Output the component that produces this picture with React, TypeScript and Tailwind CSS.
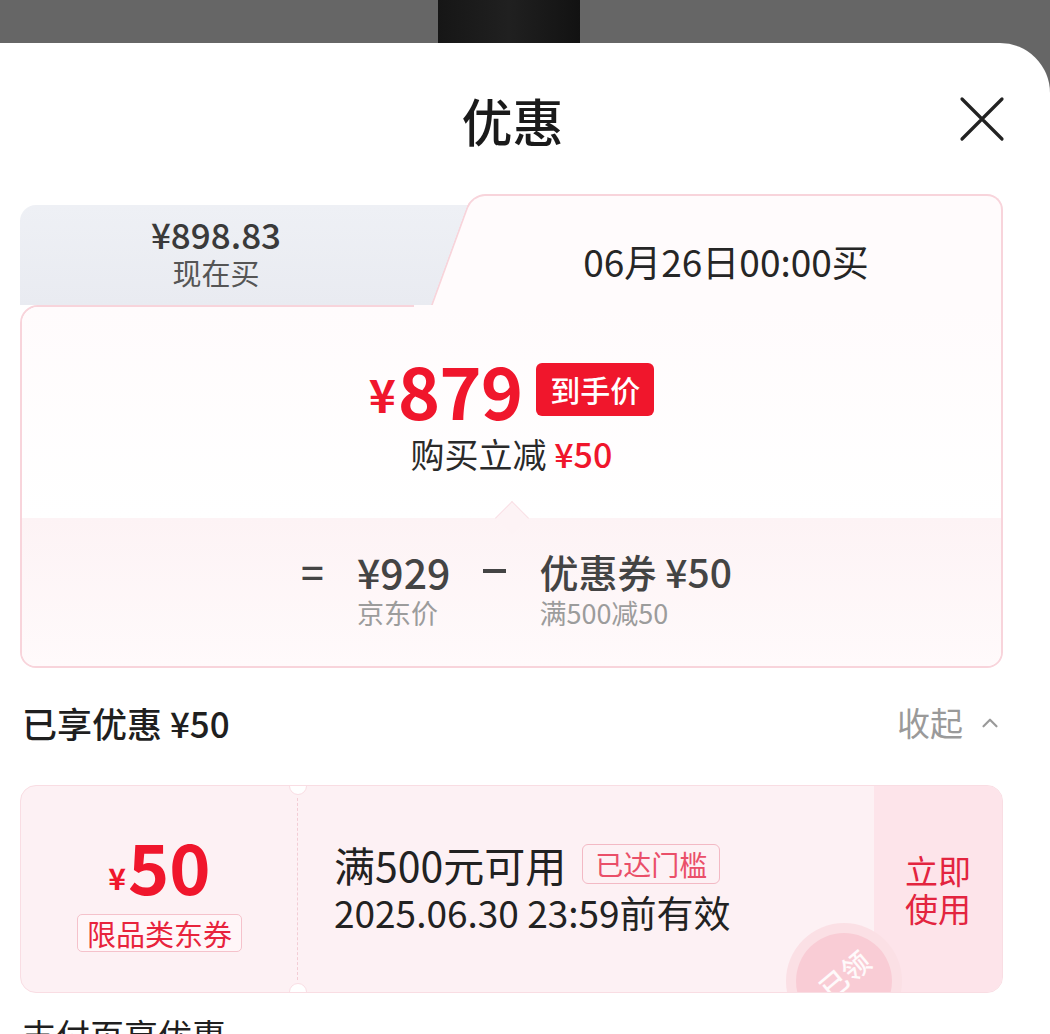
import { ChevronUp } from "lucide-react";

const FONT = { fontFamily: '"Noto Sans CJK SC", "Noto Sans", sans-serif' };

function CloseIcon() {
  return (
    <svg width="46" height="46" viewBox="0 0 46 46" fill="none">
      <path d="M3 3 L43 43 M43 3 L3 43" stroke="#222" strokeWidth="3.2" strokeLinecap="round" />
    </svg>
  );
}

function PriceCard() {
  return (
    <div className="w-[983px]">
      {/* Tabs */}
      <div className="flex h-[111px]">
        <div className="w-[460px] h-[100px] self-end shrink-0 rounded-tl-[16px] bg-gradient-to-b from-[#eef0f5] to-[#e9ebf1] flex">
          <div className="w-[392px] flex flex-col items-center justify-center pb-[6px]">
            <div className="text-[35px] leading-[38px] font-medium text-[#3a3a3a]">¥898.83</div>
            <div className="mt-[2px] text-[29px] leading-[34px] text-[#555]">现在买</div>
          </div>
        </div>
        <div className="relative -ml-[49px] flex-1 h-full">
          {/* slanted edge of the active tab */}
          <div className="absolute left-[20px] top-0 h-[111px] w-[60px] -skew-x-[20deg] rounded-tl-[14px] border-l-2 border-t-2 border-[#f8d4db] bg-[#fffbfc]" />
          <div className="relative ml-[60px] h-[111px] rounded-tr-[16px] border-t-2 border-r-2 border-[#f8d4db] bg-[#fffbfc] flex items-center justify-center pt-[22px] pr-[40px]">
            <span className="text-[37px] text-[#262626]">06月26日00:00买</span>
          </div>
        </div>
      </div>

      {/* Body */}
      <div className="relative rounded-tl-[18px] rounded-b-[16px] border-2 border-[#f8d4db]">
        <div className="absolute -top-[2px] left-[392px] right-0 h-[2px] bg-[#fffbfc]" />
        <div className="h-[211px] rounded-tl-[16px] bg-gradient-to-b from-[#fffbfc] to-white flex flex-col items-center pt-[46px]">
          <div className="flex items-center h-[72px]">
            <span className="text-[46px] font-bold text-[#f0162c] mt-[8px] mr-[2px]">¥</span>
            <span className="text-[72px] leading-[72px] font-bold text-[#f0162c] tracking-[-1px]">879</span>
            <span className="ml-[14px] h-[53px] px-[14px] rounded-[6px] bg-[#f0162c] text-white text-[30px] font-medium flex items-center">
              到手价
            </span>
          </div>
          <div className="mt-[8px] text-[34px] leading-[42px] text-[#2a2a2a]">
            购买立减 <span className="text-[#f0162c] font-medium">¥50</span>
          </div>
        </div>
        <div className="relative h-[148px] rounded-b-[14px] bg-gradient-to-b from-[#fdf3f5] to-[#fffafb] flex justify-center items-start pt-[30px] gap-[33px] pl-[10px]">
          <div className="absolute -top-[12px] left-[478px] w-[24px] h-[24px] rotate-45 bg-[#fdf3f5] border-l border-t border-[#f9e0e5]" />
          <span className="text-[40px] leading-[46px] font-medium text-[#444]">=</span>
          <div className="flex flex-col">
            <span className="text-[41px] leading-[46px] font-medium text-[#444]">¥929</span>
            <span className="mt-[4px] text-[27px] leading-[30px] text-[#9c9c9c]">京东价</span>
          </div>
          <div className="h-[46px] flex items-center">
            <div className="w-[23px] h-[4px] bg-[#444]" />
          </div>
          <div className="flex flex-col">
            <span className="text-[39px] leading-[46px] font-medium text-[#444]">优惠券 ¥50</span>
            <span className="mt-[4px] text-[27px] leading-[30px] text-[#9c9c9c]">满500减50</span>
          </div>
        </div>
      </div>
    </div>
  );
}

function Coupon() {
  return (
    <div className="relative w-[983px] h-[208px] rounded-[16px] border border-[#f9dde3] bg-[#fdf1f4] overflow-hidden flex">
      {/* notches + perforation */}
      <div className="absolute left-[268px] -top-[9px] w-[18px] h-[18px] rounded-full bg-white border border-[#f9dde3]" />
      <div className="absolute left-[268px] -bottom-[9px] w-[18px] h-[18px] rounded-full bg-white border border-[#f9dde3]" />
      <div className="absolute left-[276px] top-[12px] bottom-[12px] border-l border-dashed border-[#f3cdd5]" />

      <div className="w-[277px] flex flex-col items-center justify-center pt-[6px]">
        <div className="flex items-end text-[#f0162c] font-bold leading-none">
          <span className="text-[30px] mb-[6px] mr-[2px]">¥</span>
          <span className="text-[70px] leading-[66px]">50</span>
        </div>
        <div className="mt-[16px] h-[38px] px-[9px] rounded-[5px] border border-[#f5c2cb] bg-[#fff6f8] text-[29px] leading-[34px] text-[#e8233c] flex items-center">
          限品类东券
        </div>
      </div>

      <div className="flex-1 pl-[36px] flex flex-col justify-center pb-[4px]">
        <div className="flex items-center">
          <span className="text-[41px] leading-[50px] text-[#222]">满500元可用</span>
          <span className="ml-[16px] h-[40px] px-[12px] rounded-[6px] border border-[#f3b9c4] text-[28px] text-[#ea4f69] flex items-center">
            已达门槛
          </span>
        </div>
        <div className="text-[37px] leading-[46px] text-[#222]">2025.06.30 23:59前有效</div>
      </div>

      <div className="relative w-[128px] bg-[#fde4ea] flex flex-col items-center justify-center text-[33px] leading-[36px] text-[#e3243f]">
        <div>立即</div>
        <div className="mt-[2px]">使用</div>
      </div>

      {/* claimed stamp */}
      <div className="absolute left-[765px] top-[137px] w-[116px] h-[116px] rounded-full bg-[#fbe0e5] flex items-center justify-center">
        <div className="w-[96px] h-[96px] rounded-full bg-[#f9ccd5] flex items-center justify-center">
          <span className="-rotate-[40deg] text-[28px] text-white/90 font-medium -mt-[14px]">已领</span>
        </div>
      </div>
    </div>
  );
}

export default function App() {
  return (
    <div className="w-[1050px] h-[1034px] overflow-hidden bg-[#666666]" style={FONT}>
      <div className="h-[43px] flex">
        <div className="ml-[438px] w-[142px] h-full bg-gradient-to-r from-[#161616] via-[#202020] to-[#121212]" />
      </div>

      <div className="h-[991px] bg-white rounded-tr-[50px] pl-[20px] pr-[47px]">
        {/* Header */}
        <div className="h-[151px] flex items-start justify-between pt-[47px]">
          <div className="w-[46px]" />
          <div className="text-[51px] leading-[60px] font-medium text-[#1a1a1a]">优惠</div>
          <div className="mt-[6px] -mr-[2px]">
            <CloseIcon />
          </div>
        </div>

        <PriceCard />

        <div className="mt-[35px] h-[40px] flex items-center justify-between">
          <div className="text-[35px] leading-[40px] font-medium text-[#1f1f1f] pl-[2px]">已享优惠 ¥50</div>
          <div className="flex items-center text-[33px] text-[#9a9a9a] gap-[14px]">
            收起
            <ChevronUp size={26} strokeWidth={2} color="#9a9a9a" />
          </div>
        </div>

        <div className="mt-[42px]">
          <Coupon />
        </div>

        <div className="mt-[22px] text-[34px] leading-[40px] text-[#1f1f1f] pl-[2px]">支付页享优惠</div>
      </div>
    </div>
  );
}
